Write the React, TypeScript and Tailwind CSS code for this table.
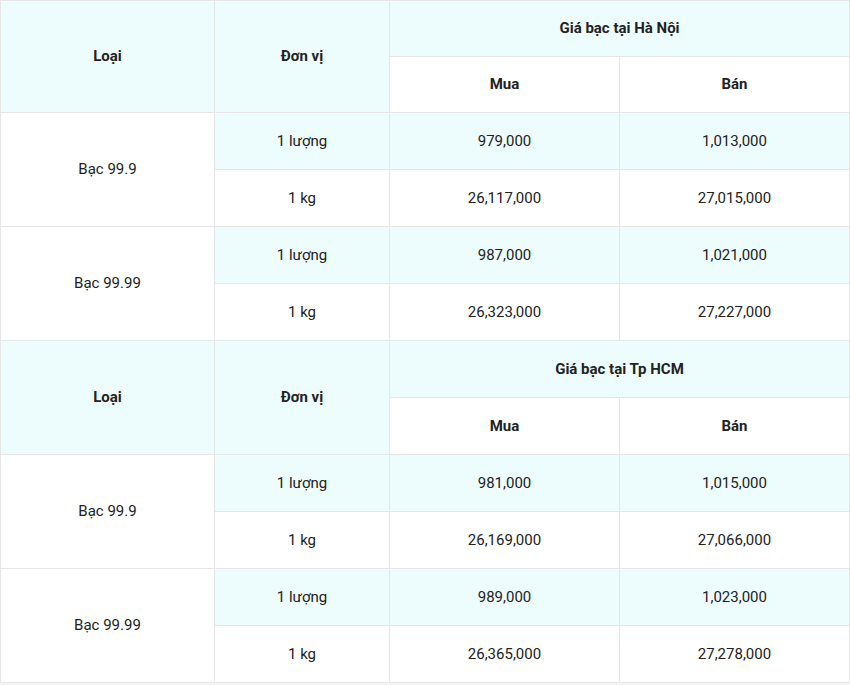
import React from 'react'

type Row = { unit: string; buy: string; sell: string }
type Group = { name: string; rows: Row[] }

const blocks: { city: string; groups: Group[] }[] = [
  {
    city: 'Giá bạc tại Hà Nội',
    groups: [
      { name: 'Bạc 99.9', rows: [{ unit: '1 lượng', buy: '979,000', sell: '1,013,000' }, { unit: '1 kg', buy: '26,117,000', sell: '27,015,000' }] },
      { name: 'Bạc 99.99', rows: [{ unit: '1 lượng', buy: '987,000', sell: '1,021,000' }, { unit: '1 kg', buy: '26,323,000', sell: '27,227,000' }] },
    ],
  },
  {
    city: 'Giá bạc tại Tp HCM',
    groups: [
      { name: 'Bạc 99.9', rows: [{ unit: '1 lượng', buy: '981,000', sell: '1,015,000' }, { unit: '1 kg', buy: '26,169,000', sell: '27,066,000' }] },
      { name: 'Bạc 99.99', rows: [{ unit: '1 lượng', buy: '989,000', sell: '1,023,000' }, { unit: '1 kg', buy: '26,365,000', sell: '27,278,000' }] },
    ],
  },
]

const cell = 'border border-[#e6e6e6] text-center align-middle'

export default function App() {
  return (
    <div className="w-[850px] h-[685px] bg-[#f4f4f4] font-['Roboto',sans-serif] text-[15px] text-[#222]">
      <table className="w-[849px] border-collapse bg-white table-fixed">
        <colgroup>
          <col className="w-[214px]" />
          <col className="w-[175px]" />
          <col className="w-[230px]" />
          <col className="w-[230px]" />
        </colgroup>
        <tbody>
          {blocks.map((b, bi) => (
            <React.Fragment key={bi}>
              <tr className={`${bi === 0 ? 'h-[56px]' : 'h-[57px]'} bg-[#edfcfd]`}>
                <td rowSpan={2} className={`${cell} font-bold`}>Loại</td>
                <td rowSpan={2} className={`${cell} font-bold`}>Đơn vị</td>
                <td colSpan={2} className={`${cell} font-bold`}>{b.city}</td>
              </tr>
              <tr className={bi === 0 ? 'h-[56px]' : 'h-[57px]'}>
                <td className={`${cell} font-bold bg-white`}>Mua</td>
                <td className={`${cell} font-bold bg-white`}>Bán</td>
              </tr>
              {b.groups.map((g, gi) =>
                g.rows.map((r, ri) => (
                  <tr key={`${gi}-${ri}`} className={`h-[57px] ${ri === 0 ? 'bg-[#edfcfd]' : 'bg-white'}`}>
                    {ri === 0 && (
                      <td rowSpan={2} className={`${cell} bg-white`}>{g.name}</td>
                    )}
                    <td className={cell}>{r.unit}</td>
                    <td className={cell}>{r.buy}</td>
                    <td className={cell}>{r.sell}</td>
                  </tr>
                ))
              )}
            </React.Fragment>
          ))}
        </tbody>
      </table>
    </div>
  )
}
